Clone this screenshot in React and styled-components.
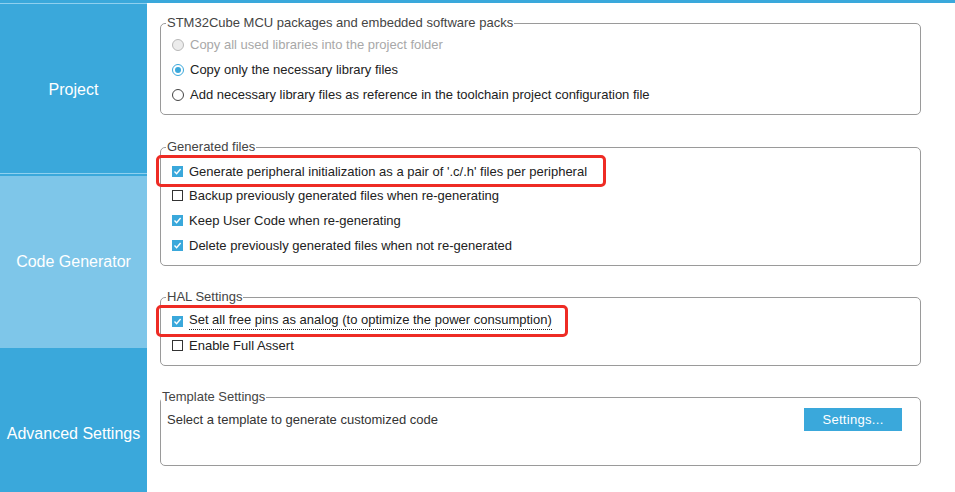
import styled, { createGlobalStyle } from "styled-components";

const BLUE = "#3aa8db";
const LIGHT_BLUE = "#7ec6e9";

const GlobalStyle = createGlobalStyle`
  html, body {
    margin: 0;
    padding: 0;
    background: #fff;
    font-family: "Liberation Sans", Arial, sans-serif;
    overflow: hidden;
  }
`;

const Page = styled.div`
  height: 492px;
  overflow: hidden;
  display: flex;
  flex-direction: column;
`;

const TopBar = styled.div`
  height: 3px;
  background: ${BLUE};
  flex: none;
`;

const Body = styled.div`
  display: flex;
  flex: 1;
  min-height: 0;
`;

const Sidebar = styled.nav`
  width: 147px;
  flex: none;
  background: ${BLUE};
  display: flex;
  flex-direction: column;
  overflow: hidden;
`;

const NavItem = styled.div`
  flex: none;
  border-top: ${({ $divider }) => ($divider ? "1px solid #8fd0ef" : "none")};
  padding-top: ${({ $divider }) => ($divider ? "2px" : "0")};
`;

const NavPanel = styled.div`
  height: ${({ $height }) => $height}px;
  display: flex;
  align-items: center;
  justify-content: center;
  background: ${({ $active }) => ($active ? LIGHT_BLUE : BLUE)};
  color: #fff;
  font-size: 16px;
  white-space: nowrap;
`;

const Main = styled.main`
  flex: 1;
  padding: 13px 0 0 13px;
  display: flex;
  flex-direction: column;
  gap: 24px;
`;

const Group = styled.fieldset`
  box-sizing: border-box;
  width: 761px;
  margin: ${({ $spaceAbove }) => $spaceAbove || 0}px 0 0;
  border: 1px solid #9a9a9a;
  border-radius: 5px;
  padding: ${({ $padTop }) => $padTop ?? 3}px ${({ $padRight }) => $padRight || 0}px
    ${({ $padBottom }) => $padBottom || 7}px ${({ $padLeft }) => $padLeft || 11}px;
  display: flex;
  flex-direction: column;
`;

const Legend = styled.legend`
  font-size: 13px;
  line-height: 14px;
  color: #444;
  padding: 0 1px;
  margin-left: -6px;
`;

const Row = styled.div`
  height: 25px;
  display: flex;
  align-items: center;
  gap: 6px;
  font-size: 13px;
  color: ${({ $disabled }) => ($disabled ? "#a8a8a8" : "#222")};
  white-space: nowrap;
`;

const HighlightRow = styled(Row)`
  box-sizing: border-box;
  width: ${({ $width }) => $width}px;
  height: 32px;
  margin: -3px 0 -4px -16px;
  padding-left: 13px;
  border: 3px solid #ee2b24;
  border-radius: 5px;
`;

const Box = styled.span`
  box-sizing: border-box;
  width: 11px;
  height: 11px;
  flex: none;
  display: inline-flex;
  align-items: center;
  justify-content: center;
  background: ${({ $checked }) => ($checked ? BLUE : "#fff")};
  border: 1px solid ${({ $checked }) => ($checked ? BLUE : "#333")};
`;

const Radio = styled.span`
  box-sizing: border-box;
  width: 12px;
  height: 12px;
  flex: none;
  border-radius: 50%;
  display: inline-flex;
  align-items: center;
  justify-content: center;
  background: ${({ $disabled }) => ($disabled ? "#ececec" : "#fff")};
  border: 1px solid
    ${({ $checked, $disabled }) => ($disabled ? "#b8b8b8" : $checked ? BLUE : "#444")};

  &::after {
    content: "";
    display: ${({ $checked }) => ($checked ? "block" : "none")};
    width: 6px;
    height: 6px;
    border-radius: 50%;
    background: ${BLUE};
  }
`;

const Dotted = styled.span`
  line-height: 14px;
  padding-bottom: 2px;
  border-bottom: 1px dotted #222;
`;

const TemplateRow = styled(Row)`
  justify-content: space-between;
  color: #333;
`;

const Button = styled.button`
  width: 98px;
  height: 23px;
  border: none;
  background: ${BLUE};
  color: #fff;
  font-family: inherit;
  font-size: 13px;
  letter-spacing: 0.3px;
  padding: 0;
  cursor: pointer;
`;

const Check = ({ checked }) => (
  <Box $checked={checked}>
    {checked && (
      <svg width="9" height="9" viewBox="0 0 9 9">
        <path d="M1.5 4.6 L3.6 6.7 L7.6 2" fill="none" stroke="#fff" strokeWidth="1.4" />
      </svg>
    )}
  </Box>
);

const CheckRow = ({ checked, children }) => (
  <Row>
    <Check checked={checked} />
    <span>{children}</span>
  </Row>
);

const App = () => (
  <Page>
    <GlobalStyle />
    <TopBar />
    <Body>
      <Sidebar>
        <NavItem $divider>
          <NavPanel $height={167}>Project</NavPanel>
        </NavItem>
        <NavItem $divider>
          <NavPanel $height={172} $active>
            Code Generator
          </NavPanel>
        </NavItem>
        <NavItem>
          <NavPanel $height={172}>Advanced Settings</NavPanel>
        </NavItem>
      </Sidebar>

      <Main>
        <Group $padTop={2}>
          <Legend>STM32Cube MCU packages and embedded software packs</Legend>
          <Row $disabled>
            <Radio $disabled />
            <span>Copy all used libraries into the project folder</span>
          </Row>
          <Row>
            <Radio $checked />
            <span>Copy only the necessary library files</span>
          </Row>
          <Row>
            <Radio />
            <span>Add necessary library files as reference in the toolchain project configuration file</span>
          </Row>
        </Group>

        <Group $padTop={4} $spaceAbove={1}>
          <Legend>Generated files</Legend>
          <HighlightRow $width={450}>
            <Check checked />
            <span>Generate peripheral initialization as a pair of '.c/.h' files per peripheral</span>
          </HighlightRow>
          <CheckRow>Backup previously generated files when re-generating</CheckRow>
          <CheckRow checked>Keep User Code when re-generating</CheckRow>
          <CheckRow checked>Delete previously generated files when not re-generated</CheckRow>
        </Group>

        <Group $padTop={4}>
          <Legend>HAL Settings</Legend>
          <HighlightRow $width={412}>
            <Check checked />
            <Dotted>Set all free pins as analog (to optimize the power consumption)</Dotted>
          </HighlightRow>
          <CheckRow>Enable Full Assert</CheckRow>
        </Group>

        <Group $padTop={3} $padLeft={6} $padRight={18} $padBottom={33}>
          <Legend>Template Settings</Legend>
          <TemplateRow>
            <span>Select a template to generate customized code</span>
            <Button>Settings...</Button>
          </TemplateRow>
        </Group>
      </Main>
    </Body>
  </Page>
);

export default App;
